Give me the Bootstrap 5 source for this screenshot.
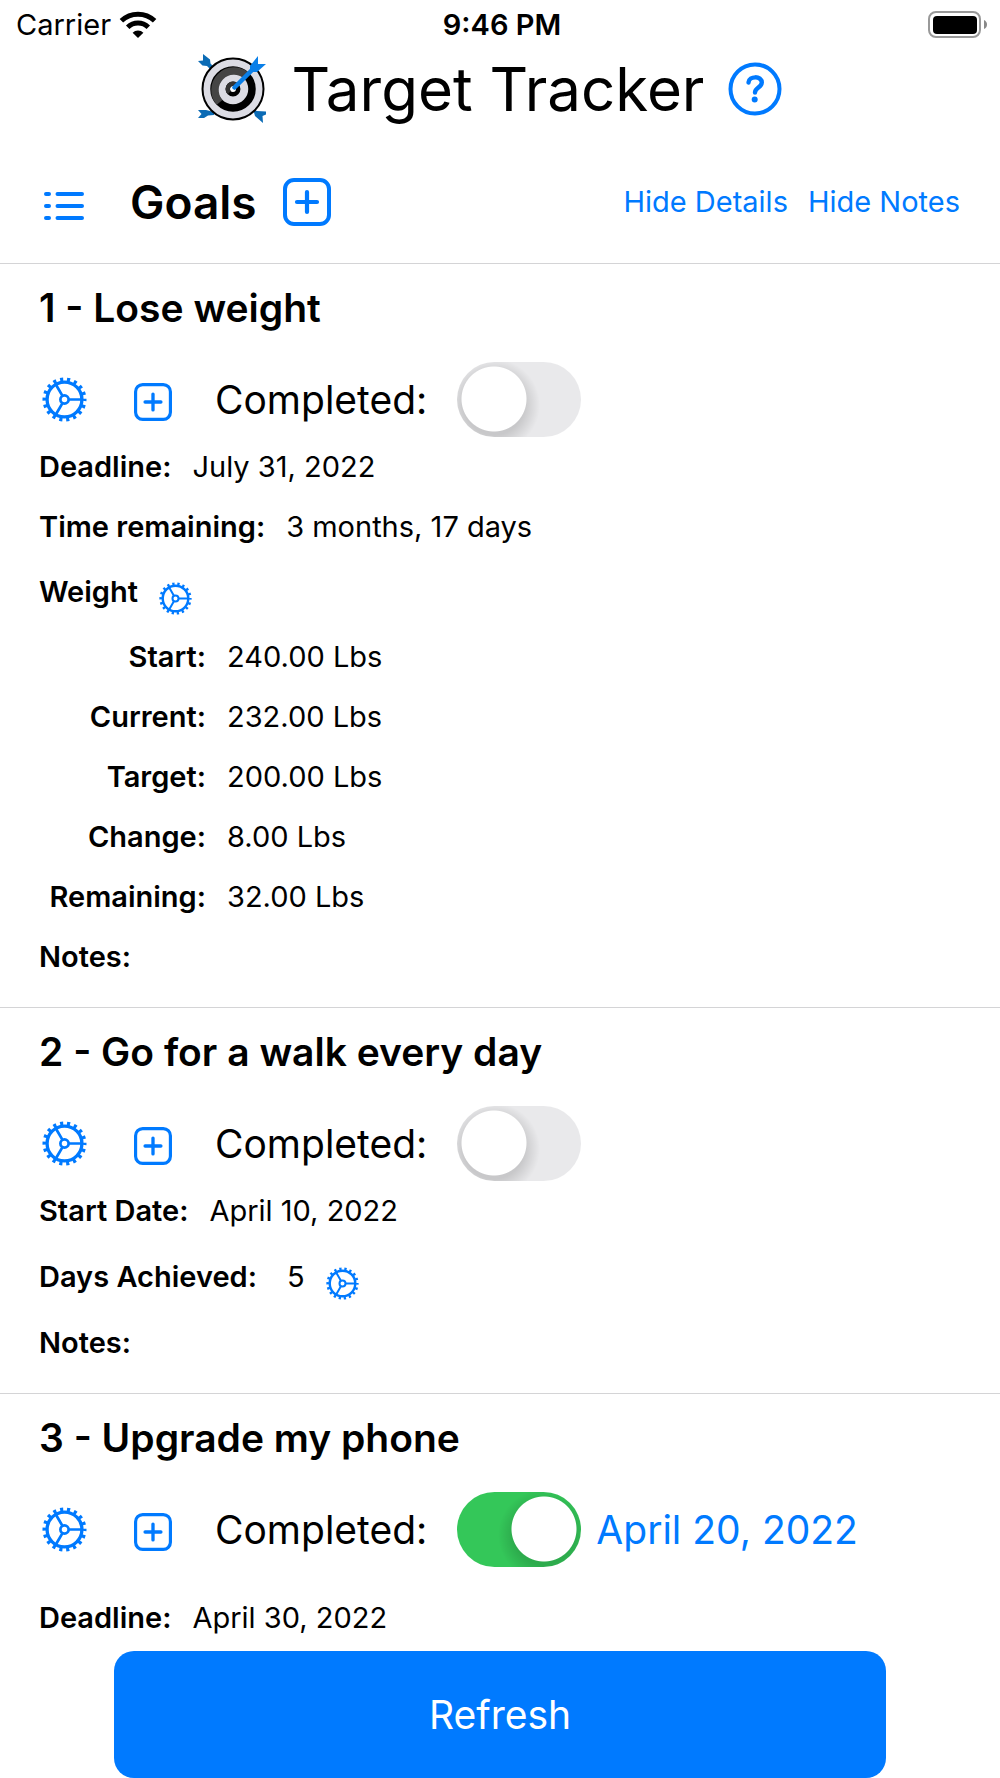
<!DOCTYPE html>
<html lang="en">
<head>
<meta charset="utf-8">
<meta name="viewport" content="width=device-width, initial-scale=1">
<title>Target Tracker</title>
<link href="https://cdn.jsdelivr.net/npm/bootstrap@5.3.0/dist/css/bootstrap.min.css" rel="stylesheet">
<style>
  :root { --ios-blue: #007aff; --rule: #d4d4d6; }
  body { font-family: Inter, "Liberation Sans", sans-serif; color: #000; background: #fff; font-size: 29px; line-height: 60px; }
  svg { display: block; flex: none; }
  .status-bar { height: 50px; line-height: 50px; padding: 0 12px 0 16px; }
  .status-bar > * { flex: 1 1 0; }
  .app-title { font-size: 60px; line-height: 78px; font-weight: 400; }
  .brand { gap: 24px; padding-right: 20px; }
  .goals-head { padding: 38px 40px 25px 43px; line-height: 72px; }
  .goals-head h2 { font-size: 46px; line-height: 72px; font-weight: 600; margin-left: 46px; margin-right: 26px; }
  .head-links { gap: 20px; }
  .head-links .btn { font-size: 29px; }
  .btn-plain { padding: 0; border: 0; color: var(--ios-blue); line-height: inherit; }
  .btn-plain:hover { color: #0062cc; }
  .goal { border-top: 1px solid var(--rule); padding: 20px 39px; }
  .goal h3 { font-size: 39px; line-height: 48px; font-weight: 600; margin-bottom: 30px; }
  .goal-tools { height: 75px; font-size: 39px; }
  .goal-tools .btn-gear { margin-left: 3px; }
  .goal-tools .btn-add { margin-left: 47px; margin-top: 4px; }
  .goal-tools label { margin-left: 43px; margin-right: 30px; }
  .goal-tools .done-date { margin-left: 15px; }
  .form-switch .form-check-input.ios-switch {
    --thumb-x: 37px;
    width: 124px; height: 75px; margin: 0; border: 0; border-radius: 38px; flex: none;
    background-color: #e9e9eb; background-size: 100% 100%; background-position: 0 0;
    background-image:
      radial-gradient(circle at var(--thumb-x) 37px, #fff 32px, rgba(255,255,255,0) 33px),
      radial-gradient(circle at var(--thumb-x) 43px, rgba(0,0,0,.14) 30px, rgba(0,0,0,0) 46px);
    box-shadow: none;
  }
  .form-switch .form-check-input.ios-switch:checked { --thumb-x: 87px; background-color: #34c759; }
  .facts { margin: 0; }
  .fact { gap: 21px; }
  .fact dt { font-weight: 600; }
  .fact dd { margin: 0; }
  .fact .btn-gear { margin-top: 8px; }
  .measure dt { width: 167px; text-align: right; }
  .has-gear { line-height: 70px; }
  .counter { line-height: 72px; }
  .counter dd { margin-left: 9px; }
  .facts-late { margin-top: 21px; }
  .refresh-bar { bottom: 0; padding: 0 114px; }
  .btn-refresh { background: var(--ios-blue); color: #fff; font-size: 39px; line-height: 127px; padding: 0; border: 0; border-radius: 20px; }
  .btn-refresh:hover { background: #0062cc; color: #fff; }
</style>
<script src="https://cdn.jsdelivr.net/npm/bootstrap@5.3.0/dist/js/bootstrap.bundle.min.js"></script>
</head>
<body class="d-flex flex-column min-vh-100">
<svg width="0" height="0" class="position-absolute" aria-hidden="true">
  <defs>
    <symbol id="gear" viewBox="-23 -23 46 46">
      <g fill="none" stroke="currentColor" stroke-width="3.4">
        <circle r="17.8"/><circle r="4.2" stroke-width="2.8"/>
        <path stroke-width="2.8" d="M4.5 0H18M-2.2 -3.9L-9 -15.6M-2.2 3.9L-9 15.6"/>
        <circle r="20.5" stroke-width="4" stroke-dasharray="3.2 3.956" stroke-dashoffset="1.6"/>
      </g>
    </symbol>
    <symbol id="plus-box" viewBox="0 0 48 48">
      <g fill="none" stroke="currentColor" stroke-linecap="round">
        <rect x="2" y="2" width="44" height="44" rx="9" stroke-width="4"/>
        <path stroke-width="4.2" d="M24 14v20M14 24h20"/>
      </g>
    </symbol>
  </defs>
</svg>

<div class="status-bar d-flex align-items-center">
  <div class="d-flex align-items-center">
    <span>Carrier</span>
    <svg class="ms-2" width="38" height="28" viewBox="0 0 38 28" role="img" aria-label="Wi-Fi">
      <path fill="#000" d="M19 27l-5.400-5.300a7.800 7.800 0 0 1 10.800 0z"/>
      <g fill="none" stroke="#000" stroke-width="5"><path d="M8.700 16.200a15 15 0 0 1 20.600 0"/><path d="M2.400 9.800a24 24 0 0 1 33.200 0"/></g>
    </svg>
  </div>
  <div class="text-center fw-semibold">9:46 PM</div>
  <div class="d-flex justify-content-end">
    <svg width="60" height="28" viewBox="0 0 60 28" role="img" aria-label="Battery full">
      <rect x="1" y="1" width="51" height="25" rx="7" fill="none" stroke="#999" stroke-width="2"/>
      <rect x="5" y="5" width="44" height="18" rx="4" fill="#000"/>
      <path fill="#888" d="M56 9q3 1.500 3 4.500t-3 4.500z"/>
    </svg>
  </div>
</div>

<header>
  <div class="brand d-flex align-items-center justify-content-center">
    <svg width="70" height="70" viewBox="0 0 70 70" role="img" aria-label="Target">
      <g fill="#0b6bb5">
        <path d="M0 7l5-.5V0l7 5.500.5 4L16 13l-3 3-4-4-4.500-.5z"/>
        <path d="M0 56h8l8 2v3l-6 .5L6 64H0l3.500-4z"/>
        <path d="M55 55l4 2 9 .5v3l-3.500 1.500.5 7-8-7z"/>
      </g>
      <circle cx="35" cy="35" r="30.500" fill="#dcdce4" stroke="#000" stroke-width="2"/>
      <circle cx="35" cy="35" r="19" fill="none" stroke="#000" stroke-width="7.500"/>
      <path d="M21.600 48.400A19 19 0 0 1 48.400 21.600" fill="none" stroke="#444" stroke-width="7.500"/>
      <circle cx="35" cy="35" r="5.200" fill="#fff" stroke="#000" stroke-width="4.500"/>
      <path d="M31.300 38.700A5.200 5.200 0 0 1 38.700 31.300" fill="none" stroke="#333" stroke-width="4.500"/>
      <path d="M36.500 33.500L57 13" stroke="#0a7fe8" stroke-width="4.500" stroke-linecap="round"/>
      <path fill="#0a7fe8" d="M52 12L60 2v8h8L59 18h-7z"/>
    </svg>
    <h1 class="app-title mb-0">Target Tracker</h1>
    <button type="button" class="btn btn-plain" aria-label="Help">
      <svg width="54" height="54" viewBox="0 0 54 54" fill="none" stroke="currentColor" stroke-linecap="round">
        <circle cx="27" cy="27" r="24.500" stroke-width="4"/>
        <path stroke-width="4.400" d="M20.500 20.500c.5-6.800 13.300-7 13.300 0 0 4.800-6.800 5.300-6.800 10"/>
        <circle cx="26.700" cy="37.500" r="3" fill="currentColor" stroke="none"/>
      </svg>
    </button>
  </div>
  <div class="goals-head d-flex align-items-center">
    <button type="button" class="btn btn-plain mt-2" aria-label="List view">
      <svg width="41" height="30" viewBox="0 0 41 30" fill="none" stroke="currentColor" stroke-width="4" stroke-linecap="round">
        <path d="M3 3h3M14.500 3H39M3 15h3M14.500 15H39M3 27h3M14.500 27H39"/>
      </svg>
    </button>
    <h2 class="mb-0">Goals</h2>
    <button type="button" class="btn btn-plain" aria-label="Add goal"><svg width="48" height="48"><use href="#plus-box"/></svg></button>
    <div class="head-links d-flex ms-auto">
      <button type="button" class="btn btn-plain">Hide Details</button>
      <button type="button" class="btn btn-plain">Hide Notes</button>
    </div>
  </div>
</header>

<main class="flex-grow-1">
  <section class="goal">
    <h3>1 - Lose weight</h3>
    <div class="goal-tools form-switch p-0 d-flex align-items-center">
      <button type="button" class="btn btn-plain btn-gear" aria-label="Goal settings"><svg width="45" height="45"><use href="#gear"/></svg></button>
      <button type="button" class="btn btn-plain btn-add" aria-label="Add entry"><svg width="38" height="38"><use href="#plus-box"/></svg></button>
      <label for="done1">Completed:</label>
      <input class="form-check-input ios-switch" type="checkbox" role="switch" id="done1">
    </div>
    <dl class="facts">
      <div class="fact d-flex"><dt>Deadline:</dt><dd>July 31, 2022</dd></div>
      <div class="fact d-flex"><dt>Time remaining:</dt><dd>3 months, 17 days</dd></div>
      <div class="fact has-gear d-flex align-items-center"><dt>Weight</dt><dd><button type="button" class="btn btn-plain btn-gear" aria-label="Weight settings"><svg width="33" height="33"><use href="#gear"/></svg></button></dd></div>
      <div class="fact measure d-flex"><dt>Start:</dt><dd>240.00 Lbs</dd></div>
      <div class="fact measure d-flex"><dt>Current:</dt><dd>232.00 Lbs</dd></div>
      <div class="fact measure d-flex"><dt>Target:</dt><dd>200.00 Lbs</dd></div>
      <div class="fact measure d-flex"><dt>Change:</dt><dd>8.00 Lbs</dd></div>
      <div class="fact measure d-flex"><dt>Remaining:</dt><dd>32.00 Lbs</dd></div>
      <div class="fact d-flex"><dt>Notes:</dt><dd></dd></div>
    </dl>
  </section>

  <section class="goal">
    <h3>2 - Go for a walk every day</h3>
    <div class="goal-tools form-switch p-0 d-flex align-items-center">
      <button type="button" class="btn btn-plain btn-gear" aria-label="Goal settings"><svg width="45" height="45"><use href="#gear"/></svg></button>
      <button type="button" class="btn btn-plain btn-add" aria-label="Add entry"><svg width="38" height="38"><use href="#plus-box"/></svg></button>
      <label for="done2">Completed:</label>
      <input class="form-check-input ios-switch" type="checkbox" role="switch" id="done2">
    </div>
    <dl class="facts">
      <div class="fact d-flex"><dt>Start Date:</dt><dd>April 10, 2022</dd></div>
      <div class="fact counter d-flex align-items-center"><dt>Days Achieved:</dt><dd>5</dd><dd class="m-0"><button type="button" class="btn btn-plain btn-gear" aria-label="Days settings"><svg width="33" height="33"><use href="#gear"/></svg></button></dd></div>
      <div class="fact d-flex"><dt>Notes:</dt><dd></dd></div>
    </dl>
  </section>

  <section class="goal pb-0">
    <h3>3 - Upgrade my phone</h3>
    <div class="goal-tools form-switch p-0 d-flex align-items-center">
      <button type="button" class="btn btn-plain btn-gear" aria-label="Goal settings"><svg width="45" height="45"><use href="#gear"/></svg></button>
      <button type="button" class="btn btn-plain btn-add" aria-label="Add entry"><svg width="38" height="38"><use href="#plus-box"/></svg></button>
      <label for="done3">Completed:</label>
      <input class="form-check-input ios-switch" type="checkbox" role="switch" id="done3" checked>
      <a href="#" class="done-date btn-plain text-decoration-none">April 20, 2022</a>
    </div>
    <dl class="facts facts-late">
      <div class="fact d-flex"><dt>Deadline:</dt><dd>April 30, 2022</dd></div>
    </dl>
  </section>
</main>

<footer class="refresh-bar position-sticky">
  <button type="button" class="btn btn-refresh d-block w-100">Refresh</button>
</footer>
</body>
</html>
